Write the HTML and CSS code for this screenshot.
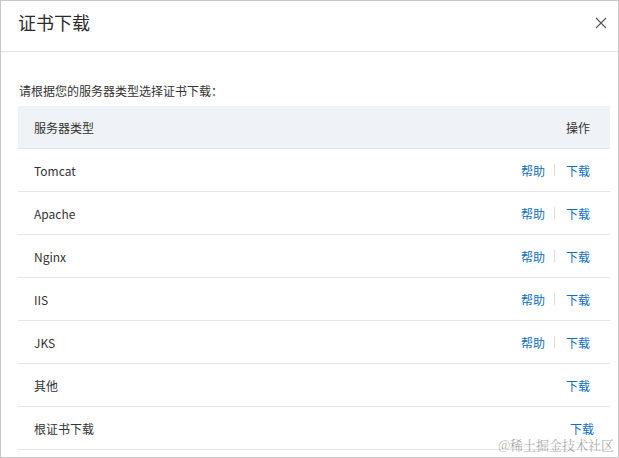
FILE: index.html
```html
<!DOCTYPE html>
<html lang="zh">
<head>
<meta charset="utf-8">
<link rel="stylesheet" href="styles.css">
</head>
<body>
<div class="dialog">
  <div class="dlg-head">
    <span class="dlg-title">证书下载</span>
    <span class="dlg-close"><svg width="12" height="12" viewBox="0 0 12 12"><path d="M1 1L11 11M11 1L1 11" stroke="#555" stroke-width="1.1" fill="none"/></svg></span>
  </div>
  <div class="dlg-body">
    <p class="intro">请根据您的服务器类型选择证书下载：</p>
    <div class="table">
      <div class="row head"><span>服务器类型</span><span class="ops">操作</span></div>
      <div class="row"><span>Tomcat</span><span class="ops"><a>帮助</a><i class="sep"></i><a>下载</a></span></div>
      <div class="row"><span>Apache</span><span class="ops"><a>帮助</a><i class="sep"></i><a>下载</a></span></div>
      <div class="row"><span>Nginx</span><span class="ops"><a>帮助</a><i class="sep"></i><a>下载</a></span></div>
      <div class="row"><span>IIS</span><span class="ops"><a>帮助</a><i class="sep"></i><a>下载</a></span></div>
      <div class="row"><span>JKS</span><span class="ops"><a>帮助</a><i class="sep"></i><a>下载</a></span></div>
      <div class="row"><span>其他</span><span class="ops"><a>下载</a></span></div>
      <div class="row last"><span>根证书下载</span><span class="ops"><a>下载</a></span></div>
    </div>
  </div>
  <div class="watermark">@稀土掘金技术社区</div>
</div>
</body>
</html>
```

FILE: styles.css
```css
html, body { margin: 0; padding: 0; }
body {
  font-family: "Noto Sans CJK SC", "Noto Sans", sans-serif;
  color: #333;
  background: #fff;
}
.dialog {
  position: relative;
  width: 619px;
  height: 458px;
  box-sizing: border-box;
  border: 1px solid #c6c6c6;
  overflow: hidden;
}
.dlg-head {
  height: 50px;
  border-bottom: 1px solid #e2e2e2;
  display: flex;
  align-items: center;
  justify-content: space-between;
  padding: 0 11px 0 17px;
}
.dlg-title {
  font-size: 18px;
  color: #2a2a2a;
  margin-top: -8px;
}
.dlg-close {
  display: flex;
  margin-top: -6px;
}
.dlg-body {
  padding: 0 8px 0 17px;
}
.intro {
  margin: 0;
  padding-top: 30px;
  height: 24px;
  font-size: 12px;
  line-height: 17px;
  color: #333;
  margin-left: 1px;
}
.table {
  display: flex;
  flex-direction: column;
}
.row {
  height: 42px;
  border-bottom: 1px solid #e5e5e5;
  display: flex;
  align-items: center;
  justify-content: space-between;
  padding: 0 20px 0 16px;
  font-size: 12px;
  color: #333;
}
.row.head {
  background: #eff2f6;
  border-bottom-color: #e3e6ea;
}
.row.last { padding-right: 16px; }
.ops {
  display: flex;
  align-items: center;
}
.ops a {
  color: #0f6fc6;
  cursor: pointer;
}
.sep {
  display: block;
  width: 1px;
  height: 12px;
  background: #dcdcdc;
  margin: 0 11px 0 9px;
}
.watermark {
  position: absolute;
  right: 4px;
  bottom: 4px;
  font-family: "Noto Serif CJK SC", "Noto Sans CJK SC", serif;
  font-size: 13px;
  line-height: 17px;
  color: rgba(140,140,140,0.75);
}
```
